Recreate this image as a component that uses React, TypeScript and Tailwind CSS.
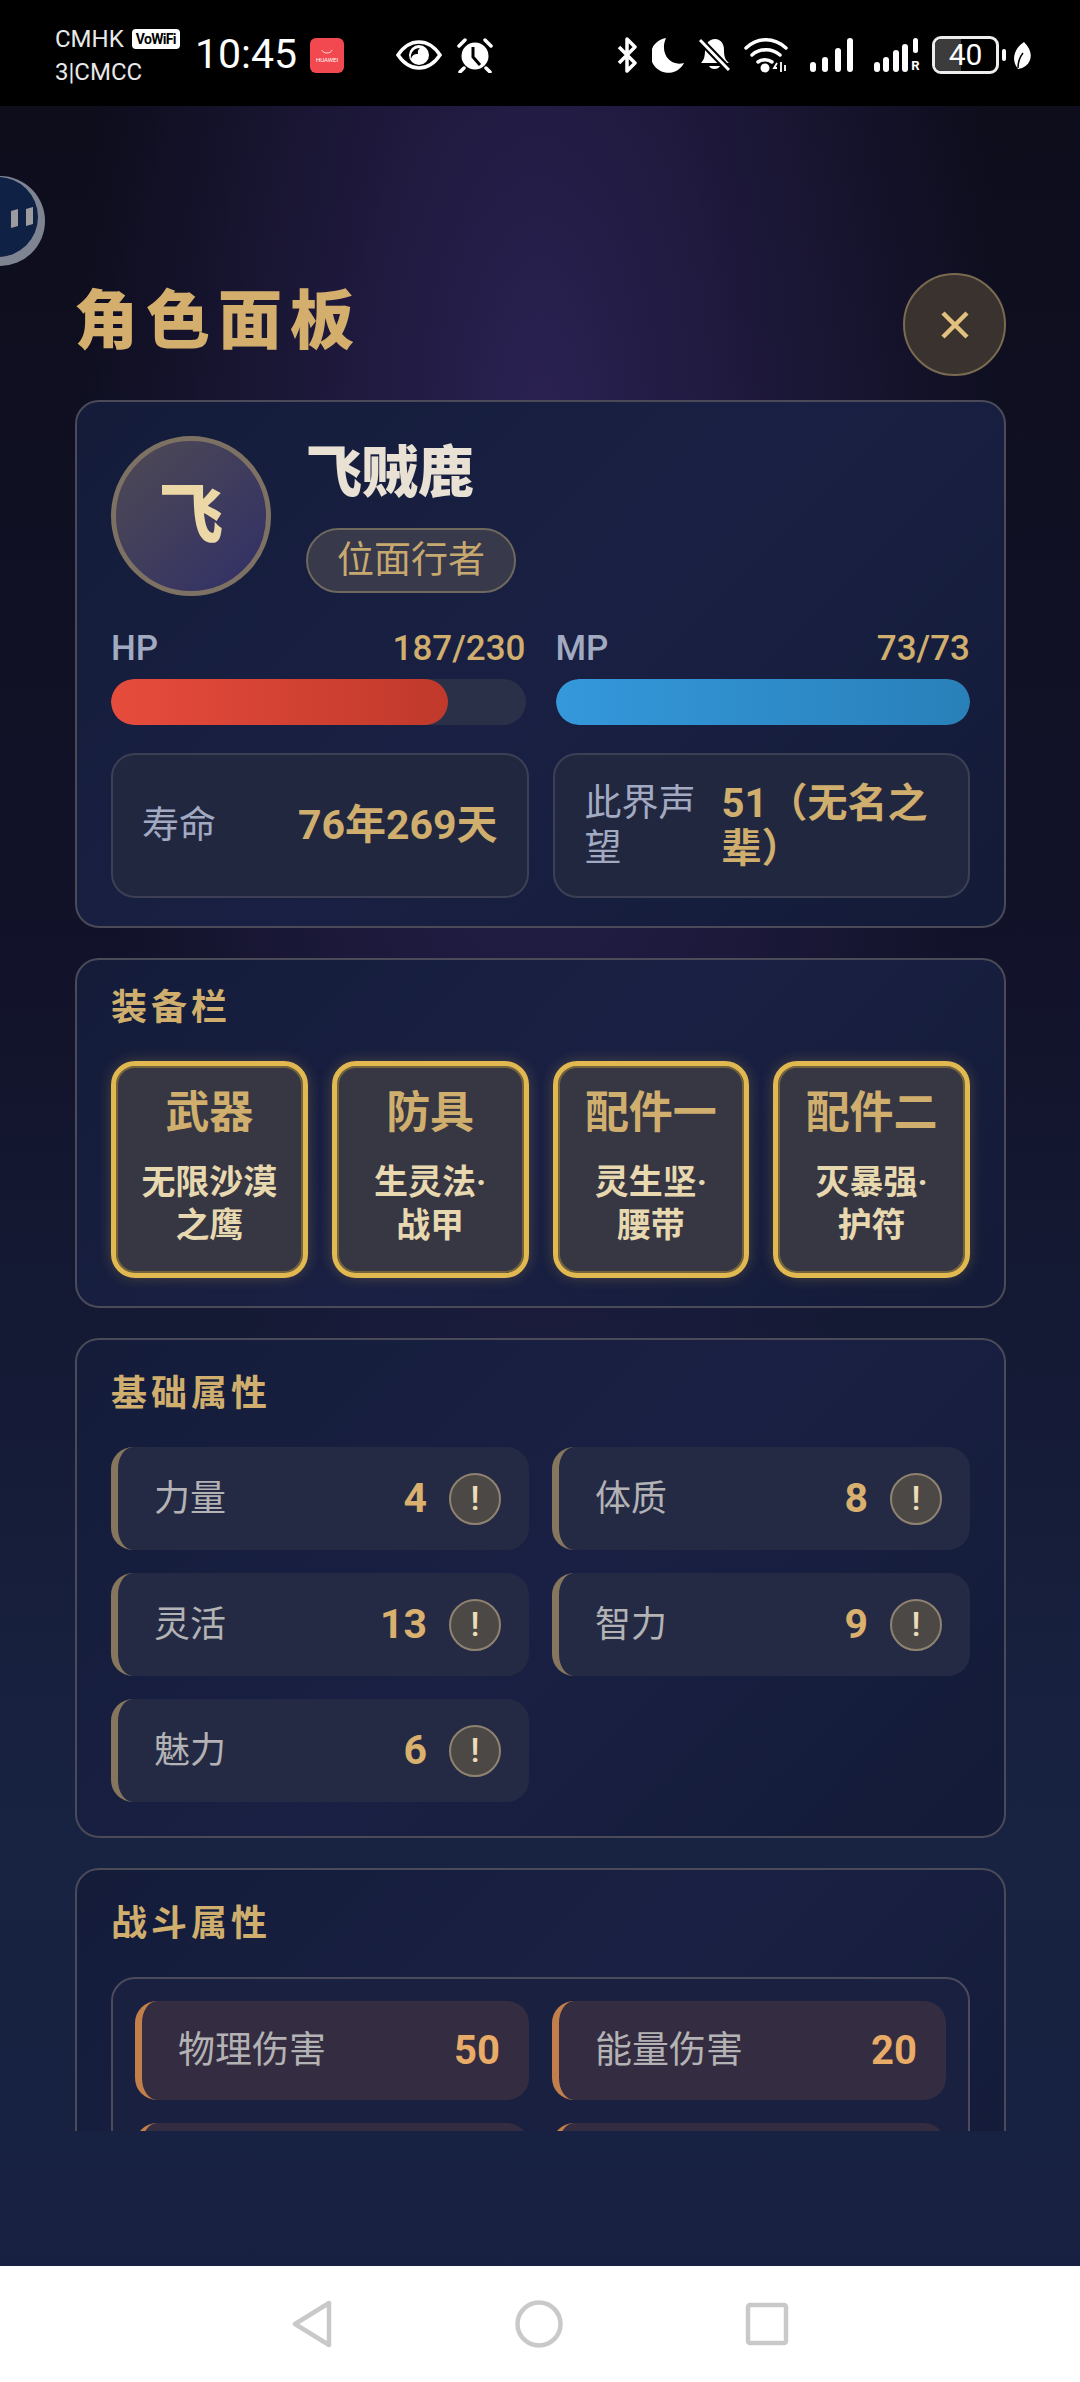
import React from 'react';

const cjk = { fontFamily: 'Roboto, "Noto Sans CJK SC", sans-serif' };

const gear = [
  { slot: '武器', name: '无限沙漠之鹰' },
  { slot: '防具', name: '生灵法·战甲' },
  { slot: '配件一', name: '灵生坚·腰带' },
  { slot: '配件二', name: '灭暴强·护符' },
];

const baseStats = [
  { label: '力量', value: 4 },
  { label: '体质', value: 8 },
  { label: '灵活', value: 13 },
  { label: '智力', value: 9 },
  { label: '魅力', value: 6 },
];

const StatusBar = () => (
  <div className="h-[106px] bg-black flex items-center text-white shrink-0">
    <div className="ml-[55px] w-[140px] text-[24px] leading-[33px] text-[#e8e8e8] pt-[5px]">
      <div className="flex items-center">
        CMHK
        <span className="ml-[8px] bg-white text-black text-[14px] leading-[20px] font-bold rounded-[4px] w-[48px] text-center tracking-tighter">VoWiFi</span>
      </div>
      <div>3|CMCC</div>
    </div>
    <div className="w-[102px] text-[41px] leading-none pt-[3px]">10:45</div>
    <div className="ml-[13px] mt-[4px] w-[34px] h-[35px] pt-[2px] rounded-[6px] bg-[#f2484f] flex flex-col items-center justify-center">
      <svg width="14" height="7" viewBox="0 0 14 7"><path d="M2 1c1 4 9 4 10 0" stroke="#ffd5d5" fill="none" strokeWidth="1" /></svg>
      <span className="text-[6px] leading-[8px] text-white">HUAWEI</span>
    </div>
    <svg className="ml-[52px] mt-[4px]" width="46" height="30" viewBox="0 0 46 30">
      <path d="M2 15C8 6 15 2 23 2s15 4 21 13c-6 9-13 13-21 13S8 24 2 15z" fill="none" stroke="#fff" strokeWidth="3.5" />
      <circle cx="23" cy="15" r="10" fill="#fff" />
      <path d="M15 19a9 9 0 0 1 9-11 6 6 0 0 0-2 6 6 6 0 0 0-7 5z" fill="#000" />
    </svg>
    <svg className="ml-[15px] mt-[4px]" width="36" height="36" viewBox="0 0 36 36">
      <circle cx="18" cy="19" r="13.5" fill="#fff" />
      <path d="M16 10v10l7 8" fill="none" stroke="#000" strokeWidth="3" />
      <path d="M2 9l6-6M34 9l-6-6M7 31l-4 4M29 31l4 4" stroke="#fff" strokeWidth="3.5" strokeLinecap="round" />
    </svg>
    <svg className="ml-[123px] mt-[4px]" width="22" height="36" viewBox="0 0 22 36">
      <path d="M3 10l16 16-8 8V2l8 8L3 26" fill="none" stroke="#fff" strokeWidth="3.5" strokeLinejoin="round" />
    </svg>
    <svg className="ml-[14px] mt-[4px]" width="33" height="36" viewBox="0 0 33 36">
      <path d="M14 1a17.5 17.5 0 1 0 18 25C19 30 7 17 14 1z" fill="#fff" />
    </svg>
    <svg className="ml-[14px] mt-[4px]" width="31" height="36" viewBox="0 0 31 36">
      <path d="M16 2c6 0 9 5 9 11 0 6 1 10 5 13H2c3-3 4-7 4-13 0-6 4-11 10-11z" fill="#fff" />
      <path d="M10 29a6 5 0 0 0 11 0z" fill="#fff" />
      <path d="M1 3l29 30" stroke="#000" strokeWidth="7" />
      <path d="M1 3l29 30" stroke="#fff" strokeWidth="3" />
    </svg>
    <svg className="ml-[14px] mt-[4px]" width="44" height="36" viewBox="0 0 44 36">
      <path d="M2 11c12-11 28-11 40 0M8 18c8-7 20-7 28 0M14 25c4-3 10-3 14 0" fill="none" stroke="#fff" strokeWidth="3.5" strokeLinecap="round" />
      <circle cx="21" cy="31" r="4.5" fill="#fff" />
      <path d="M33 26l-3 5h3M37 25v10M41 28v6" stroke="#fff" strokeWidth="1.8" fill="none" />
    </svg>
    <div className="ml-[22px] mt-[4px] w-[43px] h-[34px] flex items-end justify-between">
      {[10, 15, 24, 34].map((h, i) => (
        <span key={i} className="w-[6px] rounded-full bg-white" style={{ height: h }} />
      ))}
    </div>
    <div className="ml-[21px] mt-[4px] w-[46px] h-[34px] flex items-end justify-between">
      {[10, 15, 22, 28].map((h, i) => (
        <span key={i} className="w-[6px] rounded-full bg-white" style={{ height: h }} />
      ))}
      <span className="flex flex-col items-center w-[9px] text-[13px] leading-[13px] font-bold">
        <span className="w-[5px] h-[15px] bg-white rounded-full mb-[6px]" />R
      </span>
    </div>
    <div className="ml-[12px] mt-[4px] w-[67px] h-[38px] border-[3px] border-[#eee] rounded-[9px] relative overflow-hidden flex items-center justify-center">
      <div className="absolute left-0 top-0 bottom-0 w-[26px] bg-[#3c3c3c]" />
      <span className="relative text-[30px] leading-none">40</span>
    </div>
    <span className="ml-[3px] mt-[4px] w-[4px] h-[12px] bg-white rounded-[2px]" />
    <svg className="ml-[6px] mt-[4px]" width="19" height="29" viewBox="0 0 19 29">
      <path d="M12 1c6 6 8 12 6 18-2 5-6 8-12 9C0 21 0 9 12 1z" fill="#fff" />
      <path d="M6 27c0-6 1-10 5-15" stroke="#000" strokeWidth="1.5" fill="none" />
    </svg>
  </div>
);

const Card = ({ className, children }: { className: string; children: React.ReactNode }) => (
  <section className={`ml-[75px] mr-[74px] rounded-[24px] border-2 border-[#4a4a58] px-[34px] bg-[linear-gradient(135deg,#141c3a,#192043_50%,#131b38)] ${className}`}>
    {children}
  </section>
);

const SectionTitle = ({ children }: { children: React.ReactNode }) => (
  <h2 className="text-[36px] leading-[40px] font-bold tracking-[4px] text-[#cfae6e]">{children}</h2>
);

const Bar = ({ label, value, pct, fill }: { label: string; value: string; pct: number; fill: string }) => (
  <div className="flex-1">
    <div className="flex justify-between text-[35px] leading-[40px] font-medium">
      <span className="text-[#a2aac2]">{label}</span>
      <span className="text-[#cfae6e]">{value}</span>
    </div>
    <div className="mt-[10px] h-[46px] rounded-full bg-[#2a3048] overflow-hidden">
      <div className={`h-full rounded-full ${fill}`} style={{ width: `${pct}%` }} />
    </div>
  </div>
);

export default function App() {
  return (
    <div className="w-[1080px] h-[2382px] flex flex-col overflow-hidden bg-white" style={cjk}>
      <StatusBar />
      <main className="flex-1 min-h-0 relative overflow-hidden bg-[linear-gradient(180deg,#0d0d1c_0%,#12132a_40%,#182342_80%,#172040_100%)]">
        <div className="absolute inset-0 bg-[radial-gradient(ellipse_460px_1200px_at_540px_330px,#2a2152_0%,rgba(42,33,82,0.45)_55%,rgba(42,33,82,0)_100%)]" />

        <svg className="absolute left-0 top-[69px]" width="46" height="92" viewBox="0 0 46 92">
          <circle cx="0" cy="46" r="45" fill="#7f8493" />
          <circle cx="-2" cy="42" r="40" fill="#0f2145" />
          <path d="M11 36l7-2v17l-7 2zM26 34l7-2v17l-7 2z" fill="#9c9c9e" />
        </svg>

        <div className="relative h-[2025px] overflow-hidden">
          <header className="h-[294px] ml-[75px] mr-[74px] flex justify-between items-start">
            <h1 className="mt-[176px] -ml-[1px] text-[64px] leading-[80px] font-black tracking-[8px] text-[#d4ae6d]">角色面板</h1>
            <button className="mt-[167px] w-[103px] h-[103px] rounded-full bg-[#3a322f] border-2 border-[#7a6a50] flex items-center justify-center">
              <svg width="30" height="30" viewBox="0 0 30 30"><path d="M3 3l24 24M27 3L3 27" stroke="#e2c07e" strokeWidth="4.5" /></svg>
            </button>
          </header>

          <Card className="h-[528px] pt-[34px]">
            <div className="flex">
              <div className="w-[160px] h-[160px] rounded-full border-[5px] border-[#7d7163] bg-[linear-gradient(135deg,#4f4a54,#302f66)] flex items-center justify-center text-[64px] font-black text-[#ecd7a7]">飞</div>
              <div className="ml-[35px] pt-[3px]">
                <div className="text-[56px] leading-[68px] font-black text-[#e9e2d4]">飞贼鹿</div>
                <div className="mt-[21px] w-[210px] h-[65px] rounded-full border-2 border-[#6e685f] bg-[#38394a] flex items-center justify-center text-[37px] text-[#c7a970]">位面行者</div>
              </div>
            </div>
            <div className="flex gap-[30px] mt-[33px]">
              <Bar label="HP" value="187/230" pct={81.4} fill="bg-[linear-gradient(90deg,#e74c3c,#c0392b)]" />
              <Bar label="MP" value="73/73" pct={100} fill="bg-[linear-gradient(90deg,#3498db,#2980b9)]" />
            </div>
            <div className="grid grid-cols-2 gap-[24px] mt-[28px] h-[145px]">
              <div className="rounded-[24px] border-2 border-[#3d4055] bg-[#222740] px-[29px] flex items-center justify-between">
                <span className="text-[37px] text-[#a2aac2]">寿命</span>
                <span className="text-[41px] font-bold text-[#cfae6e]">76年269天</span>
              </div>
              <div className="rounded-[24px] border-2 border-[#3d4055] bg-[#222740] pl-[30px] pr-[24px] flex items-center gap-[23px]">
                <span className="w-[114px] shrink-0 text-[37px] leading-[45px] text-[#a2aac2]">此界声望</span>
                <span className="flex-1 text-[40px] leading-[45px] font-bold text-[#cfae6e]">51（无名之辈）</span>
              </div>
            </div>
          </Card>

          <Card className="mt-[30px] h-[350px] pt-[28px]">
            <SectionTitle>装备栏</SectionTitle>
            <div className="grid grid-cols-4 gap-[24px] mt-[33px]">
              {gear.map((g) => (
                <div key={g.slot} className="h-[217px] rounded-[24px] border-[5px] border-[#e2b850] bg-[#363742] shadow-[0_0_14px_rgba(226,184,80,0.25),inset_0_0_0_2px_rgba(130,110,60,0.8)] px-[24px] pt-[22px] text-center">
                  <div className="text-[44px] leading-[50px] font-bold text-[#cfae6e] -mx-[20px]">{g.slot}</div>
                  <div className="mt-[23px] text-[34px] leading-[43px] font-bold text-[#e8d8b0]">{g.name}</div>
                </div>
              ))}
            </div>
          </Card>

          <Card className="mt-[30px] h-[500px] pt-[34px]">
            <SectionTitle>基础属性</SectionTitle>
            <div className="grid grid-cols-2 gap-[23px] mt-[33px]">
              {baseStats.map((s) => (
                <div key={s.label} className="h-[103px] rounded-[22px] border-l-[7px] border-[#86765e] bg-[#242a44] pl-[36px] pr-[28px] flex items-center">
                  <span className="flex-1 text-[36px] text-[#b3b2b4]">{s.label}</span>
                  <span className="text-[41px] font-bold text-[#d9b06e]">{s.value}</span>
                  <span className="ml-[22px] w-[52px] h-[52px] rounded-full border-2 border-[#8f8270] bg-[#4c4846] flex items-center justify-center text-[34px] font-medium text-[#ecdcb8]">!</span>
                </div>
              ))}
            </div>
          </Card>

          <Card className="mt-[30px] h-[400px] pt-[34px]">
            <SectionTitle>战斗属性</SectionTitle>
            <div className="mt-[33px] rounded-[24px] border-2 border-[#4d4b5b] bg-[#1a2140] px-[22px] pt-[22px] h-[300px]">
              <div className="grid grid-cols-2 gap-x-[23px] gap-y-[23px]">
                {[
                  ['物理伤害', '50'],
                  ['能量伤害', '20'],
                  ['', ''],
                  ['', ''],
                ].map(([label, value], i) => (
                  <div key={i} className="h-[99px] rounded-[22px] border-l-[7px] border-[#c27f4c] bg-[#342c40] pl-[36px] pr-[29px] flex items-center justify-between">
                    <span className="text-[37px] text-[#b3b2b4]">{label}</span>
                    <span className="text-[40px] font-bold text-[#e8ac68]">{value}</span>
                  </div>
                ))}
              </div>
            </div>
          </Card>
        </div>
      </main>

      <nav className="h-[116px] shrink-0 bg-white flex items-center justify-center gap-[182px]">
        <svg width="42" height="48" viewBox="0 0 42 48"><path d="M38 3v42L4 24z" fill="none" stroke="#c9c9c9" strokeWidth="4.5" strokeLinejoin="round" /></svg>
        <svg width="48" height="48" viewBox="0 0 48 48"><circle cx="24" cy="24" r="21.5" fill="none" stroke="#c9c9c9" strokeWidth="4.5" /></svg>
        <svg width="44" height="44" viewBox="0 0 44 44"><rect x="3" y="3" width="38" height="38" rx="2" fill="none" stroke="#c9c9c9" strokeWidth="4.5" /></svg>
      </nav>
    </div>
  );
}
